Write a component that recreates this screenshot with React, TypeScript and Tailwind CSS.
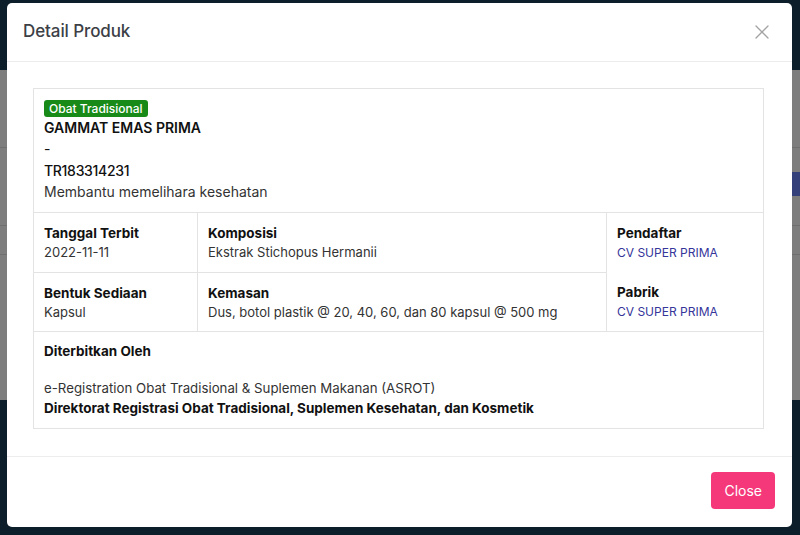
import { X } from "lucide-react";

const font = { fontFamily: "Inter, 'Noto Sans', sans-serif" };

function Cell({ label, value, link, className = "" }: { label: string; value: string; link?: boolean; className?: string }) {
  return (
    <div className={`px-[10px] pt-[10px] pb-[9px] ${className}`}>
      <div className="text-[13.5px] leading-[20px] font-bold text-[#111]">{label}</div>
      <div className={`leading-[19px] ${link ? "text-[12px] text-[#35359a]" : "text-[13px] text-[#333]"}`}>{value}</div>
    </div>
  );
}

export default function App() {
  return (
    <div className="relative w-[800px] h-[535px] overflow-hidden bg-[#0c1e29]" style={font}>
      {/* page behind the modal */}
      <div className="h-[70px]" />
      <div className="h-[330px] bg-[#7d7d7d] flex flex-col">
        <div className="h-[78px] border-b border-[#6f6f6f]" />
        <div className="h-[78px] border-b border-[#6f6f6f] flex justify-end items-start pt-[24px]">
          <div className="w-[20px] h-[24px] bg-[#34407a]" />
        </div>
        <div className="h-[29px] border-b border-[#6f6f6f]" />
        <div className="flex-1" />
      </div>

      {/* overlay + modal */}
      <div className="absolute inset-0 pl-[7px] pr-[8px] pt-[3px]">
        <div className="h-[524px] bg-white rounded-[5px] flex flex-col">
          <div className="h-[59px] flex items-center justify-between pl-[16px] pr-[18px] border-b border-[#ececec]">
            <h2 className="text-[17px] font-medium text-[#3d3f47] tracking-[-0.1px]">Detail Produk</h2>
            <X className="w-[24px] h-[24px] text-[#a3a3a3]" strokeWidth={1.3} />
          </div>

          <div className="flex-1 pl-[26px] pr-[28px] pt-[26px]">
            <div className="border border-[#e3e3e3]">
              <div className="px-[10px] pt-[11px] pb-[10px]">
                <div className="leading-[17px] h-[17px]">
                  <span className="inline-block align-top bg-[#178a17] text-white text-[12px] leading-[17px] font-medium px-[5px] rounded-[3px]">
                    Obat Tradisional
                  </span>
                </div>
                <div className="text-[14px] leading-[21px] font-semibold text-[#111]">GAMMAT EMAS PRIMA</div>
                <div className="text-[14px] leading-[22px] text-[#111]">-</div>
                <div className="text-[14px] leading-[22px] font-medium text-[#111] tracking-[-0.3px]">TR183314231</div>
                <div className="text-[14px] leading-[20px] text-[#333]">Membantu memelihara kesehatan</div>
              </div>

              <div className="grid grid-cols-[163px_409px_1fr] grid-rows-[59px_59px] border-t border-[#e3e3e3]">
                <Cell label="Tanggal Terbit" value="2022-11-11" />
                <Cell label="Komposisi" value="Ekstrak Stichopus Hermanii" className="border-l border-[#e3e3e3]" />
                <div className="row-span-2 border-l border-[#e3e3e3] flex flex-col">
                  <Cell label="Pendaftar" value="CV SUPER PRIMA" link className="h-[59px]" />
                  <Cell label="Pabrik" value="CV SUPER PRIMA" link className="h-[59px]" />
                </div>
                <Cell label="Bentuk Sediaan" value="Kapsul" className="border-t border-[#e3e3e3]" />
                <Cell
                  label="Kemasan"
                  value="Dus, botol plastik @ 20, 40, 60, dan 80 kapsul @ 500 mg"
                  className="border-t border-l border-[#e3e3e3]"
                />
              </div>

              <div className="border-t border-[#e3e3e3] px-[10px] pt-[9px] pb-[9px] h-[97px]">
                <div className="text-[13.5px] leading-[20px] font-bold text-[#111]">Diterbitkan Oleh</div>
                <div className="h-[17px]" />
                <div className="text-[13.25px] leading-[20px] text-[#333]">
                  e-Registration Obat Tradisional &amp; Suplemen Makanan (ASROT)
                </div>
                <div className="text-[13.5px] leading-[20px] font-bold text-[#111]">
                  Direktorat Registrasi Obat Tradisional, Suplemen Kesehatan, dan Kosmetik
                </div>
              </div>
            </div>
          </div>

          <div className="h-[71px] border-t border-[#ededed] flex justify-end items-start pt-[15px] pr-[17px]">
            <button className="h-[37px] px-[13px] bg-[#f5387a] text-white text-[14px] rounded-[4px]">Close</button>
          </div>
        </div>
      </div>
    </div>
  );
}
